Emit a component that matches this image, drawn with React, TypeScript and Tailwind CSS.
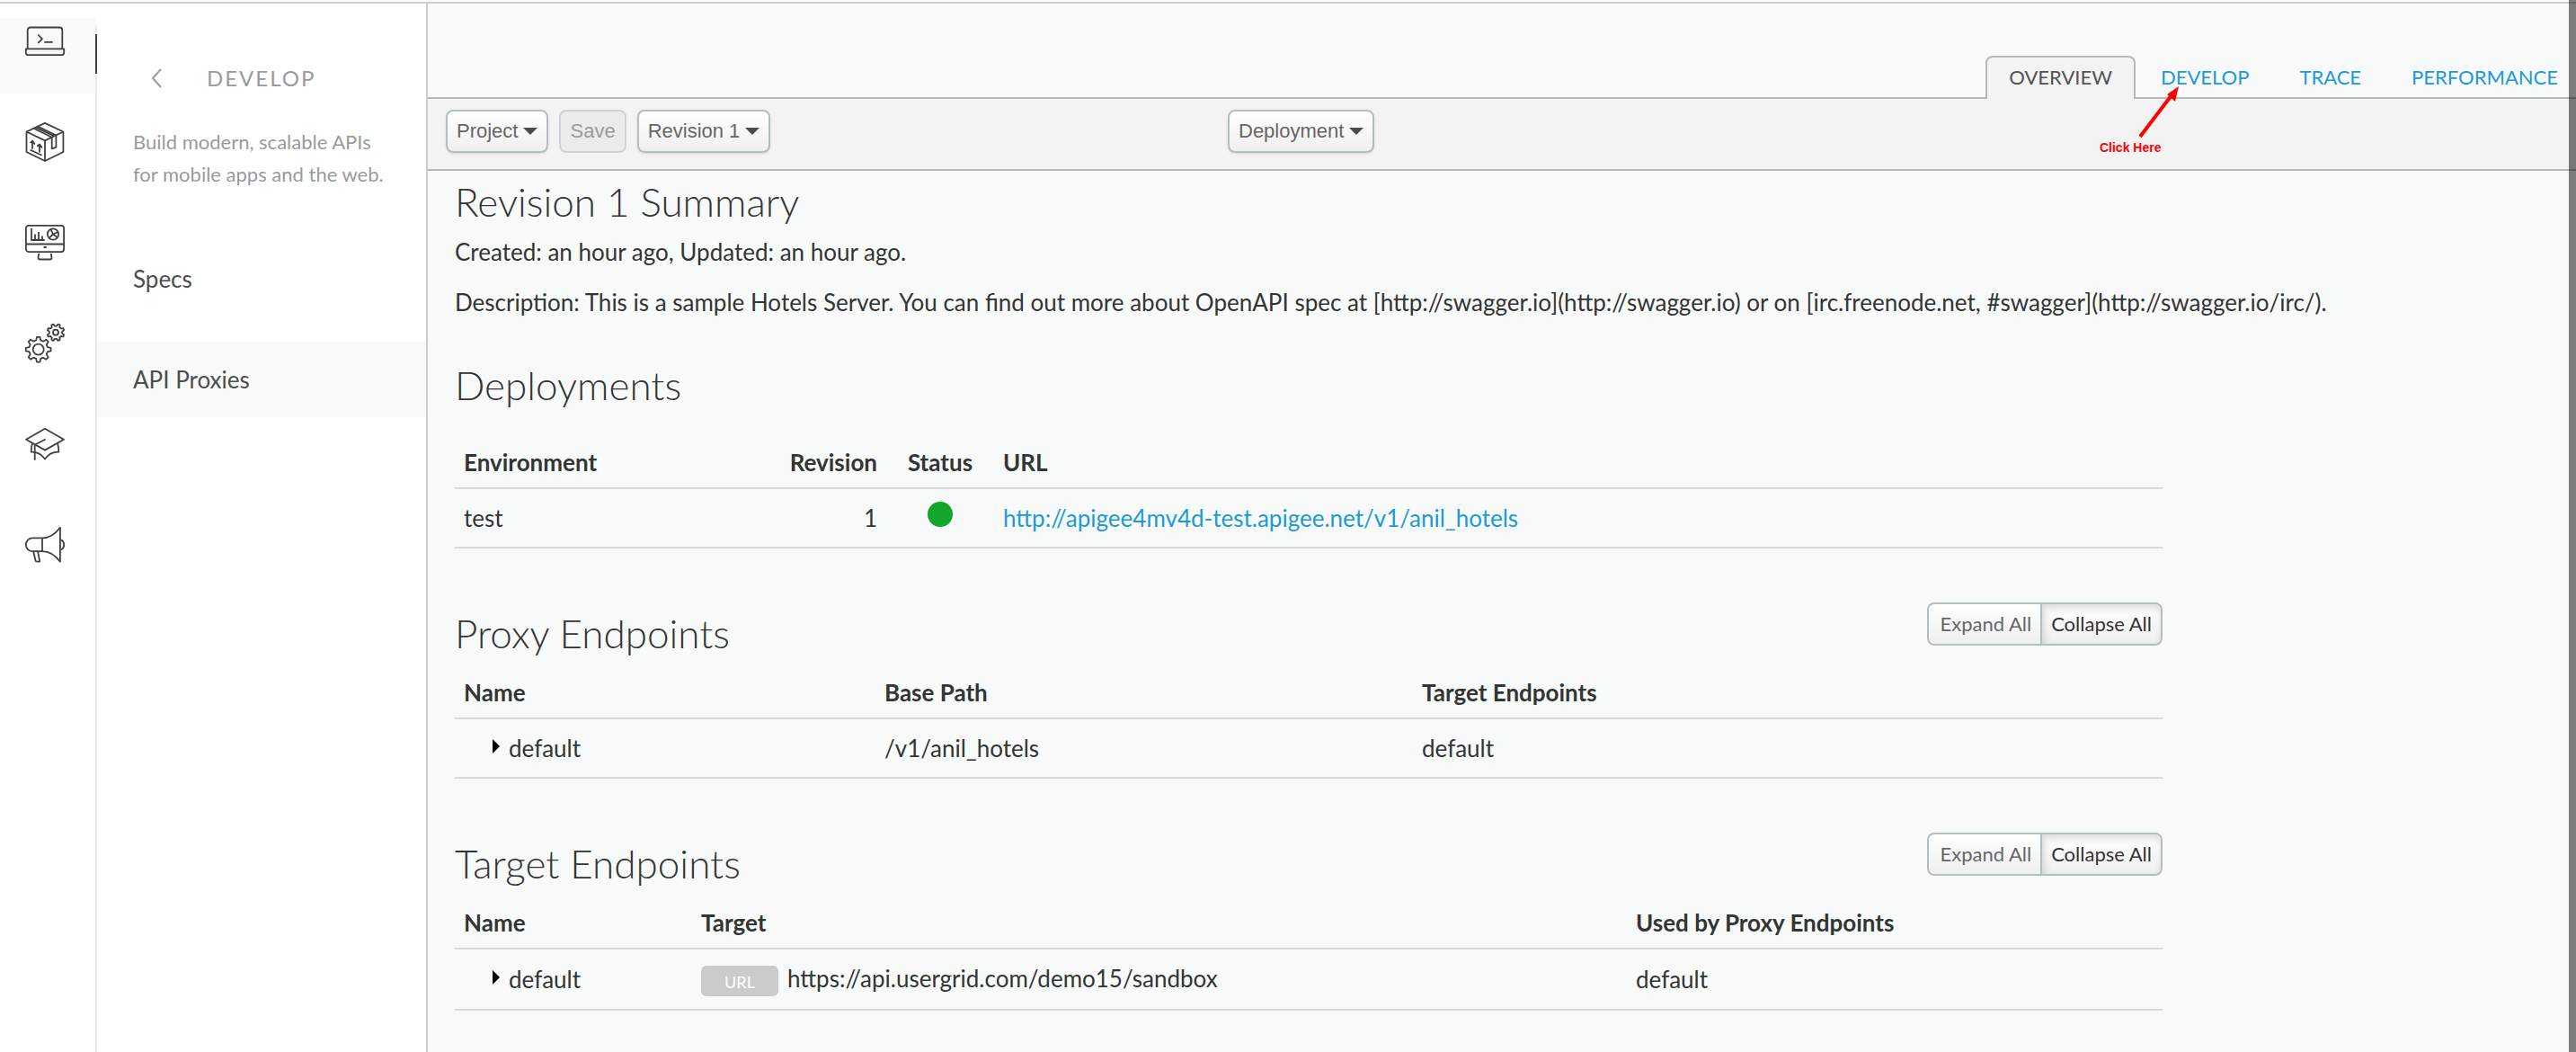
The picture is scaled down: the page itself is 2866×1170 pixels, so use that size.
import type { ReactNode } from "react";

const gearPath = (cx: number, cy: number, outer: number, inner: number, turn: number) => {
  const points: string[] = [];
  const point = (radius: number, degrees: number) => {
    const a = (degrees * Math.PI) / 180;
    points.push(`${(cx + radius * Math.cos(a)).toFixed(2)} ${(cy + radius * Math.sin(a)).toFixed(2)}`);
  };
  for (let i = 0; i < 8; i++) {
    const mid = i * 45 + turn;
    point(inner, mid - 14);
    point(outer, mid - 7);
    point(outer, mid + 7);
    point(inner, mid + 14);
  }
  return `M${points.join("L")}Z`;
};

function Icon({ children }: { children: ReactNode }) {
  return (
    <svg
      viewBox="0 0 44 44"
      className="size-11 overflow-visible"
      fill="none"
      stroke="#3f4040"
      strokeWidth="1.8"
      strokeLinejoin="round"
      aria-hidden="true"
    >
      {children}
    </svg>
  );
}

const railItems: { label: string; icon: ReactNode }[] = [
  {
    label: "Develop",
    icon: (
      <Icon>
        <path d="M2.7 30V9.5a3 3 0 0 1 3-3h32.6a3 3 0 0 1 3 3V30" />
        <path d="M.8 30.4h42.4v3.8a3 3 0 0 1-3 3H3.8a3 3 0 0 1-3-3z" />
        <path d="M14.3 14.5l4.6 4.8-4.6 4.6M21.3 22.8h9.4" />
      </Icon>
    ),
  },
  {
    label: "Publish",
    icon: (
      <Icon>
        <path d="M22 .9l20.4 9.6V33L22 43 1.5 33V10.5z" />
        <path d="M1.5 10.500L22 20.400l20.400-9.900M22 20.400V43" />
        <path d="M9.500 6.700l20.200 10v12.700l4.700-1.500V14.500L14 4.500M11.800 5.600l20.200 9.700" />
        <path d="M8 20.500v9.300M5.600 23l2.400-2.500 2.800 4M16 24.500v9M13.300 26.800l2.700-2.300 2.900 4.100M5.600 30.700l13 6" />
      </Icon>
    ),
  },
  {
    label: "Analyze",
    icon: (
      <Icon>
        <rect x=".9" y="2.8" width="42.2" height="29.3" rx="3" />
        <path d="M.9 23.500h42.200M20.500 27h3.200" />
        <path d="M15.300 33.800l-.8 4.700a2 2 0 0 0 2 2h11a2 2 0 0 0 2-2l-.8-4.700" />
        <path d="M7 6v13h14.700M11 19v-6.500M15 19v-9M19 19v-4.500" />
        <circle cx="31" cy="12.5" r="6.2" />
        <path d="M31 12.500l5.600-2.500M31 12.500l-4.500 4.300M31 12.500l-2.500-5.700M31 12.500l5 3.500" />
      </Icon>
    ),
  },
  {
    label: "Admin",
    icon: (
      <Icon>
        <path d={gearPath(14.7, 28.7, 14, 10.5, -90)} />
        <circle cx="14.7" cy="28.7" r="6" />
        <path d={gearPath(34, 9.7, 9.5, 7.2, -67.5)} />
        <circle cx="34" cy="9.7" r="3" />
      </Icon>
    ),
  },
  {
    label: "Learn",
    icon: (
      <Icon>
        <path d="M22 4.800l21 11.900-21 11.900L1 16.700z" />
        <path d="M22.700 16.500l-12 6.200v17" />
        <path d="M7.900 21.200c-1 3-1.200 6-1.200 9.400 6.500-.2 12 3 15.300 8 3.300-5 8.800-8.200 15.300-8 0-3.400-.2-6.400-1.200-9.400" />
      </Icon>
    ),
  },
  {
    label: "Announcements",
    icon: (
      <Icon>
        <path d="M19 14.400H8.200a7.400 7.400 0 0 0 0 14.800H19zM19 14.400c8 0 14.500-4.600 19.900-11.700v38C33.500 33.600 27 29.200 19 29.200" />
        <path d="M40 16.200c4.300 2.600 4.300 8.600 0 11.200M9.200 29.300l2.200 9.700a2 2 0 0 0 2 1.600h2.800l-2-11.300" />
      </Icon>
    ),
  },
];

function IconRail() {
  return (
    <nav aria-label="Main" className="flex w-[108px] shrink-0 flex-col pt-4">
      <ul className="flex flex-col gap-7">
        {railItems.map((item, i) => (
          <li key={item.label}>
            <a
              href="#"
              aria-label={item.label}
              className={`flex h-21 w-[106px] justify-center pr-1.5 pt-1 ${i === 0 ? "bg-[#f8faf9]" : ""}`}
            >
              {item.icon}
            </a>
          </li>
        ))}
      </ul>
    </nav>
  );
}

function SidePanel() {
  return (
    <aside className="flex w-[368px] shrink-0 border-r-2 border-[#cbcdcc]">
      <div className="-ml-0.5 mt-6 w-0.5 shrink-0 bg-[#e9e9e9]">
        <div className="mt-2.5 h-11 bg-[#3f4040]" />
      </div>
      <div className="flex-1">
        <div className="flex items-center pl-[60px] pt-[67px] text-[#999b9a]">
          <button type="button" aria-label="Back" className="flex w-3 justify-end">
            <svg viewBox="0 0 12 22" className="h-[22px] w-3" fill="none" stroke="currentColor" strokeWidth="2" aria-hidden="true">
              <path d="M11 1L2 11l9 10" />
            </svg>
          </button>
          <h2 className="pl-[50px] text-2xl leading-8 tracking-[2px]">DEVELOP</h2>
        </div>
        <p className="px-10 pt-[37px] text-[22px] leading-9 text-[#999b9a]">
          Build modern, scalable APIs
          <br />
          for mobile apps and the web.
        </p>
        <ul className="flex flex-col gap-7 pt-14 text-[26px] leading-9 text-[#4c4e4d]">
          <li>
            <a href="#" className="flex h-21 items-center px-10">Specs</a>
          </li>
          <li>
            <a href="#" className="flex h-21 items-center bg-[#f8faf9] px-10">API Proxies</a>
          </li>
        </ul>
      </div>
    </aside>
  );
}

function Tabs() {
  const link = "px-7 pb-1";
  return (
    <nav aria-label="Proxy views" className="flex h-[106px] items-end justify-end border-b-2 border-[#b7b9b8] text-[22px] leading-9 text-[#1d9ad6]">
      <a href="#" aria-current="page" className="-mb-0.5 rounded-t-lg border-2 border-b-0 border-[#b7b9b8] bg-[#f3f3f3] px-6 pb-1.5 pt-1 text-[#525453]">
        OVERVIEW
      </a>
      <div className="relative">
        <a href="#" className={`block ${link}`}>DEVELOP</a>
        <svg viewBox="0 0 46 60" className="pointer-events-none absolute left-1 top-7 h-[60px] w-[46px]" aria-hidden="true">
          <path d="M1 56L36 10" stroke="#fe0000" strokeWidth="4" />
          <path d="M44 0L31 9l9 8z" fill="#fe0000" />
        </svg>
        <span className="pointer-events-none absolute -left-10 top-[86px] whitespace-nowrap font-['Liberation_Sans',sans-serif] text-sm font-bold leading-5 text-[#fe0000]">
          Click Here
        </span>
      </div>
      <a href="#" className={link}>TRACE</a>
      <a href="#" className="pb-1 pl-7 pr-5">PERFORMANCE</a>
    </nav>
  );
}

function ToolButton({ children, menu = true, disabled = false }: { children: ReactNode; menu?: boolean; disabled?: boolean }) {
  return (
    <button
      type="button"
      disabled={disabled}
      className={`flex h-12 items-center gap-1.5 rounded-lg border-2 px-2.5 font-['Liberation_Sans',sans-serif] text-[22px] leading-7 ${
        disabled
          ? "border-[#ced3d6] bg-[#ebebeb] text-[#9b9b9b]"
          : "border-[#b3bec2] bg-linear-to-b from-white to-[#efefef] text-[#666] shadow-sm"
      }`}
    >
      {children}
      {menu && (
        <svg viewBox="0 0 16 8" className="h-2 w-4" aria-hidden="true">
          <path d="M0 0h16L8 8z" fill="#4b4b4b" />
        </svg>
      )}
    </button>
  );
}

function Toolbar() {
  return (
    <div className="flex h-20 border-b-2 border-[#b7b9b8] bg-[#f3f3f3] pl-5 pt-3">
      <div className="flex basis-[870px] gap-3">
        <ToolButton>Project</ToolButton>
        <ToolButton menu={false} disabled>Save</ToolButton>
        <ToolButton>Revision 1</ToolButton>
      </div>
      <ToolButton>Deployment</ToolButton>
    </div>
  );
}

function Heading({ children }: { children: ReactNode }) {
  return <h2 className="text-[44px] font-light leading-13 text-[#333534]">{children}</h2>;
}

function ExpandCollapse() {
  return (
    <div className="-mt-2 flex h-12 text-[22px] leading-7">
      <button type="button" className="rounded-l-lg border-2 border-r-0 border-[#b3bec2] bg-linear-to-b from-white to-[#efefef] pl-3 pr-2.5 text-[#666]">
        Expand All
      </button>
      <button
        type="button"
        aria-pressed="true"
        className="rounded-r-lg border-2 border-[#b3bec2] bg-linear-to-b from-white to-[#efefef] px-2.5 text-[#333] shadow-[inset_2px_4px_8px_rgba(0,0,0,0.15)]"
      >
        Collapse All
      </button>
    </div>
  );
}

function Table({ widths, head, row }: { widths: string[]; head: ReactNode; row: ReactNode }) {
  return (
    <table className="w-full table-fixed border-collapse text-left [&_td]:border-b-2 [&_td]:border-[#d8dad9] [&_td]:px-2.5 [&_td]:py-3.5 [&_th]:border-b-2 [&_th]:border-[#d8dad9] [&_th]:px-2.5 [&_th]:pb-2.5">
      <colgroup>
        {widths.map((w, i) => (
          <col key={i} className={w} />
        ))}
      </colgroup>
      <thead>
        <tr>{head}</tr>
      </thead>
      <tbody>
        <tr>{row}</tr>
      </tbody>
    </table>
  );
}

function DefaultToggle() {
  return (
    <button type="button" className="flex items-center gap-2.5 pl-8">
      <svg viewBox="0 0 8 16" className="mb-1 h-4 w-2" aria-hidden="true">
        <path d="M0 0l8 8-8 8z" fill="#000" />
      </svg>
      default
    </button>
  );
}

function Content() {
  return (
    <div className="max-w-[1930px] pl-7.5 pt-2 text-[26px] leading-9 text-[#333534]">
      <Heading>Revision 1 Summary</Heading>
      <p className="pt-3">Created: an hour ago, Updated: an hour ago.</p>
      <p className="whitespace-nowrap pt-5">
        Description: This is a sample Hotels Server. You can find out more about OpenAPI spec at [http://swagger.io](http://swagger.io) or on
        [irc.freenode.net, #swagger](http://swagger.io/irc/).
      </p>

      <section className="pt-12">
        <Heading>Deployments</Heading>
        <div className="pt-[42px]">
          <Table
            widths={["w-[350px]", "w-[130px]", "w-[120px]", "w-auto"]}
            head={
              <>
                <th>Environment</th>
                <th className="text-right">Revision</th>
                <th className="text-center">Status</th>
                <th>URL</th>
              </>
            }
            row={
              <>
                <td>test</td>
                <td className="text-right">1</td>
                <td>
                  <span role="img" aria-label="Deployed" className="mx-auto mb-2 block size-7 rounded-full bg-[#12a62a]" />
                </td>
                <td>
                  <a href="#" className="text-[#1d9ad6]">http://apigee4mv4d-test.apigee.net/v1/anil_hotels</a>
                </td>
              </>
            }
          />
        </div>
      </section>

      <section className="pt-[68px]">
        <div className="flex items-start justify-between">
          <Heading>Proxy Endpoints</Heading>
          <ExpandCollapse />
        </div>
        <div className="pt-[22px]">
          <Table
            widths={["w-[468px]", "w-[598px]", "w-auto"]}
            head={
              <>
                <th>Name</th>
                <th>Base Path</th>
                <th>Target Endpoints</th>
              </>
            }
            row={
              <>
                <td><DefaultToggle /></td>
                <td>/v1/anil_hotels</td>
                <td>default</td>
              </>
            }
          />
        </div>
      </section>

      <section className="pt-[68px]">
        <div className="flex items-start justify-between">
          <Heading>Target Endpoints</Heading>
          <ExpandCollapse />
        </div>
        <div className="pt-[22px]">
          <Table
            widths={["w-[264px]", "w-[1040px]", "w-auto"]}
            head={
              <>
                <th>Name</th>
                <th>Target</th>
                <th>Used by Proxy Endpoints</th>
              </>
            }
            row={
              <>
                <td><DefaultToggle /></td>
                <td>
                  <div className="flex gap-2.5">
                    <span className="mt-1 h-[34px] w-[86px] rounded-md bg-[#cbcbcb] text-center text-lg leading-9 text-white">URL</span>
                    https://api.usergrid.com/demo15/sandbox
                  </div>
                </td>
                <td>default</td>
              </>
            }
          />
        </div>
      </section>
    </div>
  );
}

export default function App() {
  return (
    <div className="relative flex min-h-screen flex-col overflow-hidden bg-white pt-0.5 font-[Lato,sans-serif]">
      <div className="flex flex-1 border-t-2 border-[#cbcdcc]">
        <IconRail />
        <SidePanel />
        <main className="min-w-0 flex-1 bg-[#f8faf9]">
          <Tabs />
          <Toolbar />
          <Content />
        </main>
      </div>
      <div className="absolute inset-y-0 right-0 w-2 bg-black/50" />
    </div>
  );
}
